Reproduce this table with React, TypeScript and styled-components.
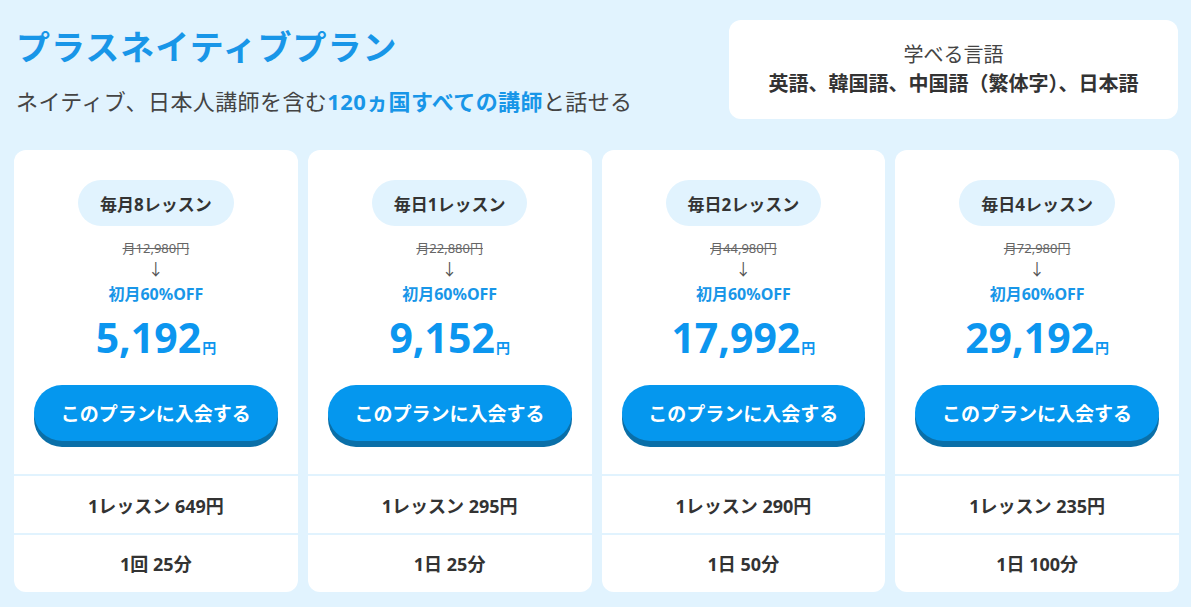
import React from 'react';
import styled, { createGlobalStyle } from 'styled-components';

type Plan = {
  label: string;
  regular: string;
  price: string;
  perLesson: string;
  duration: string;
};

const plans: Plan[] = [
  { label: '毎月8レッスン', regular: '月12,980円', price: '5,192', perLesson: '1レッスン 649円', duration: '1回 25分' },
  { label: '毎日1レッスン', regular: '月22,880円', price: '9,152', perLesson: '1レッスン 295円', duration: '1日 25分' },
  { label: '毎日2レッスン', regular: '月44,980円', price: '17,992', perLesson: '1レッスン 290円', duration: '1日 50分' },
  { label: '毎日4レッスン', regular: '月72,980円', price: '29,192', perLesson: '1レッスン 235円', duration: '1日 100分' },
];

const GlobalStyle = createGlobalStyle`
  html, body {
    margin: 0;
    padding: 0;
    background: #e1f3fe;
  }
  body {
    font-family: "Noto Sans", "Noto Sans CJK JP", sans-serif;
    color: #333;
  }
`;

const Page = styled.div`
  padding: 20px 12px 0 14px;
  height: 607px;
  box-sizing: border-box;
  background: #e1f3fe;
  overflow: hidden;
`;

const Header = styled.header`
  display: flex;
  justify-content: space-between;
  align-items: flex-start;
`;

const Intro = styled.div`
  padding-left: 2px;
`;

const Title = styled.h1`
  margin: 5px 0 0;
  font-size: 34px;
  line-height: 44px;
  font-weight: 700;
  color: #1896e8;
  letter-spacing: 1px;
`;

const Lead = styled.p`
  margin: 16px 0 0;
  font-size: 22px;
  line-height: 32px;
  color: #444;
  letter-spacing: 0.4px;
`;

const Accent = styled.span`
  color: #1896e8;
  font-weight: 700;
`;

const LangBox = styled.div`
  width: 449px;
  height: 99px;
  margin-right: 1px;
  box-sizing: border-box;
  padding-top: 21px;
  background: #fff;
  border-radius: 12px;
  text-align: center;
`;

const LangLabel = styled.div`
  font-size: 20px;
  line-height: 28px;
  color: #444;
`;

const LangList = styled.div`
  font-size: 20px;
  line-height: 30px;
  font-weight: 700;
  color: #333;
`;

const Cards = styled.div`
  display: grid;
  grid-template-columns: repeat(4, 1fr);
  gap: 10px;
  margin-top: 31px;
`;

const Card = styled.section`
  background: #fff;
  border-radius: 12px;
  overflow: hidden;
  display: flex;
  flex-direction: column;
  height: 442px;
`;

const Main = styled.div`
  display: flex;
  flex-direction: column;
  align-items: center;
  padding: 30px 20px 33px;
  border-bottom: 2px solid #e1f3fe;
`;

const Badge = styled.div`
  height: 46px;
  padding: 0 22px;
  display: flex;
  align-items: center;
  border-radius: 23px;
  background: #e1f3fe;
  font-size: 17px;
  font-weight: 700;
  color: #333;
`;

const Regular = styled.div`
  margin-top: 12px;
  font-size: 13px;
  line-height: 20px;
  color: #666;
  text-decoration: line-through;
`;

const Arrow = styled.div`
  font-family: "Noto Sans CJK JP", sans-serif;
  font-size: 16px;
  line-height: 20px;
  color: #555;
`;

const Discount = styled.div`
  margin-top: 6px;
  font-size: 16px;
  line-height: 20px;
  font-weight: 700;
  color: #1896e8;
`;

const Price = styled.div`
  margin-top: 9px;
  font-size: 41px;
  line-height: 48px;
  font-weight: 700;
  color: #0c96ef;
`;

const Yen = styled.span`
  font-size: 14px;
  line-height: 1;
  margin-left: 1px;
`;

const JoinButton = styled.button`
  margin-top: 24px;
  width: 100%;
  height: 56px;
  border: none;
  border-radius: 28px;
  background: #0597ee;
  box-shadow: 0 6px 0 #0a6fa8;
  color: #fff;
  font-family: inherit;
  font-size: 19px;
  font-weight: 700;
  cursor: pointer;
`;

const Row = styled.div<{ $h: number; $divider?: boolean }>`
  height: ${(p) => p.$h}px;
  display: flex;
  align-items: center;
  justify-content: center;
  font-size: 18px;
  font-weight: 700;
  color: #333;
  border-bottom: ${(p) => (p.$divider ? '2px solid #e1f3fe' : 'none')};
`;

const PlanCard: React.FC<{ plan: Plan }> = ({ plan }) => (
  <Card>
    <Main>
      <Badge>{plan.label}</Badge>
      <Regular>{plan.regular}</Regular>
      <Arrow>↓</Arrow>
      <Discount>初月60%OFF</Discount>
      <Price>
        {plan.price}
        <Yen>円</Yen>
      </Price>
      <JoinButton>このプランに入会する</JoinButton>
    </Main>
    <Row $h={57} $divider>
      {plan.perLesson}
    </Row>
    <Row $h={55}>{plan.duration}</Row>
  </Card>
);

export default function App() {
  return (
    <>
      <GlobalStyle />
      <Page>
        <Header>
          <Intro>
            <Title>プラスネイティブプラン</Title>
            <Lead>
              ネイティブ、日本人講師を含む<Accent>120ヵ国すべての講師</Accent>と話せる
            </Lead>
          </Intro>
          <LangBox>
            <LangLabel>学べる言語</LangLabel>
            <LangList>英語、韓国語、中国語（繁体字）、日本語</LangList>
          </LangBox>
        </Header>
        <Cards>
          {plans.map((p) => (
            <PlanCard key={p.label} plan={p} />
          ))}
        </Cards>
      </Page>
    </>
  );
}
